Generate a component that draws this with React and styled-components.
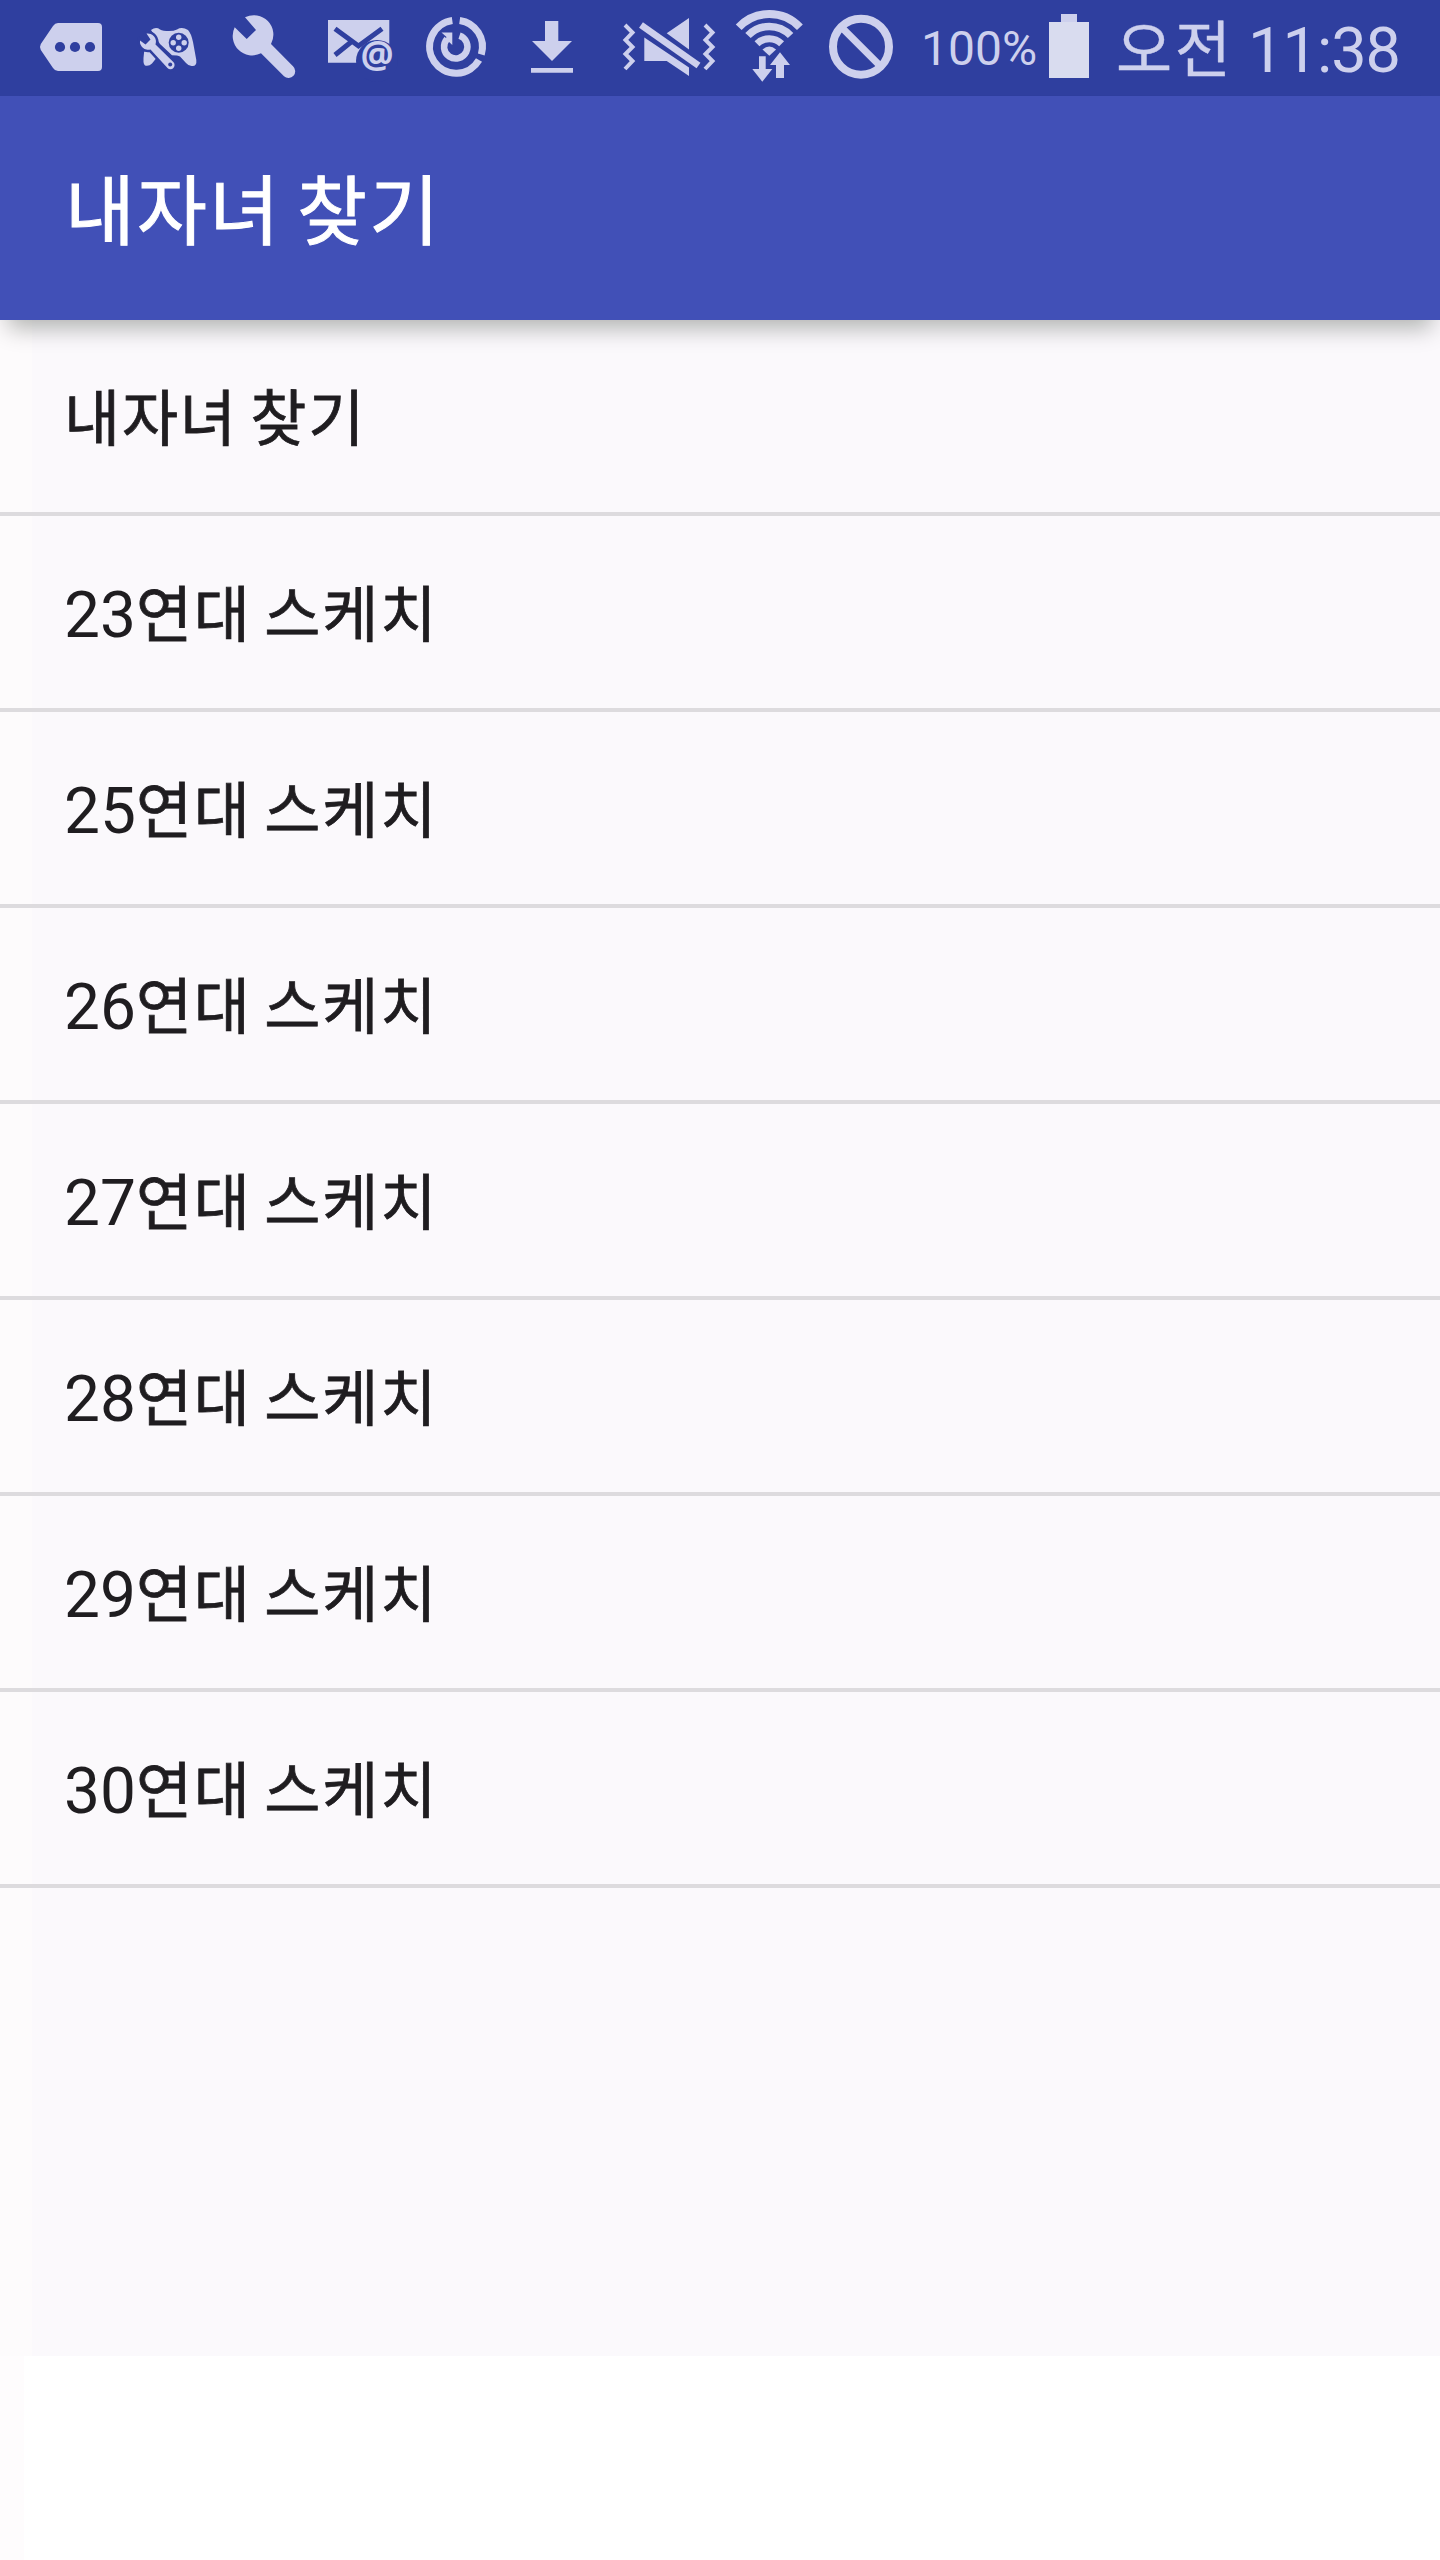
import React from "react";
import styled, { createGlobalStyle } from "styled-components";

const filas = [
    { numero: "", nombre: "내자녀 찾기" },
    { numero: "23", nombre: "연대 스케치" },
    { numero: "25", nombre: "연대 스케치" },
    { numero: "26", nombre: "연대 스케치" },
    { numero: "27", nombre: "연대 스케치" },
    { numero: "28", nombre: "연대 스케치" },
    { numero: "29", nombre: "연대 스케치" },
    { numero: "30", nombre: "연대 스케치" },
]

const App = () => {
    return(
        <Pantalla>
            <GlobalStyle />
            <StatusBar>
                <Icono viewBox="0 0 96 96">
                    <path d="M34 23H74a4 4 0 0 1 4 4V67a4 4 0 0 1-4 4H34q-3 0-5-3L16.800 50q-1.600-3 0-6L29 26q2-3 5-3z" />
                    <g className="fondo">
                        <circle cx="36" cy="47" r="5.1" />
                        <circle cx="51" cy="47" r="5.1" />
                        <circle cx="66" cy="47" r="5.1" />
                    </g>
                </Icono>
                <Icono viewBox="0 0 96 96">
                    <path d="M31 30Q36 26.500 40 29.500Q43 31 49 31Q54 31 57 29.500Q62 26.500 68 30Q71 33 73 42L76.300 60Q77 66 72.500 66Q69 66.500 66 63L60 56.500Q58 55.200 52 55.200L40 44Z" />
                    <path d="M24 53Q24 49 29 51L36 58.500L32 63.500Q29 66.500 25 65.500Q22.500 64 24 53Z" />
                    <path className="fondo borde" d="M26.500 33.500A8.300 8.300 0 0 1 35.500 44.500L53.300 62A4 4 0 0 1 47.500 68L30.500 49.500A8.300 8.300 0 0 1 20 40.500L25.500 44.500L30.500 39.500Z" />
                    <path d="M26.500 33.500A8.300 8.300 0 0 1 35.500 44.500L53.300 62A4 4 0 0 1 47.500 68L30.500 49.500A8.300 8.300 0 0 1 20 40.500L25.500 44.500L30.500 39.500Z" />
                    <g className="fondo">
                        <circle cx="50.200" cy="64.500" r="2" />
                        <circle cx="58.700" cy="42.700" r="10" />
                    </g>
                    <circle cx="58.700" cy="37.300" r="2.700" />
                    <circle cx="58.700" cy="48.200" r="2.700" />
                    <circle cx="53.200" cy="42.700" r="2.700" />
                    <circle cx="64.200" cy="42.700" r="2.700" />
                </Icono>
                <Icono viewBox="0 0 96 96">
                    <path d="M29 17.300A19.500 19.500 0 0 1 55 44L77 66.300A6.500 6.500 0 0 1 68 76.300L45 53.300A19.500 19.500 0 0 1 18.700 27.300L30.700 39L40 30Z" />
                </Icono>
                <Icono viewBox="0 0 96 96">
                    <path d="M16 20H77.300V62.700H16Z" />
                    <path className="corte" d="M23 28.800L46.500 46L70 28.800M23 55L39.700 41.500" />
                    <circle className="fondo" cx="65" cy="61" r="21" />
                    <text x="65" y="67.500" textAnchor="middle">@</text>
                </Icono>
                <Icono viewBox="0 0 96 96">
                    <path className="trazo" strokeWidth="7" d="M51.700 20.500A26.500 26.500 0 0 1 73.300 54.400M71 60A26.500 26.500 0 1 1 44.300 20.500" />
                    <path className="trazo" strokeWidth="6.500" d="M51.500 35.700A11.700 11.700 0 1 1 39 39" />
                    <path d="M33.500 32.500H44.300V45L40.500 41.500L36.500 41L38.500 37Z" />
                </Icono>
                <Icono viewBox="0 0 96 96">
                    <path d="M41 21H54.300V41H68L48 61L28 41H41ZM27 68H69V72.700H27Z" />
                </Icono>
                <Icono viewBox="0 0 120 96" $ancho={120}>
                    <path className="trazo" strokeWidth="4" d="M25 25L32.500 32.500L25.500 40L32.500 47L25.500 54L32.500 61L25 69M105 25L112.500 32.500L105.500 40L112.500 47L105.500 54L112.500 61L105 69" />
                    <path d="M89 18V49.500L66.700 33.300ZM44.300 37.500L89 67.500V76L66.700 61H44.300Z" />
                    <path className="trazo" strokeWidth="6.700" d="M41 25L98.500 65.500" />
                </Icono>
                <Icono viewBox="0 0 96 96">
                    <path className="trazo" strokeWidth="8" d="M18.700 27.300A42 42 0 0 1 79.900 27.300" />
                    <path className="trazo" strokeWidth="7.500" d="M28 35.500A29.500 29.500 0 0 1 70.600 35.500" />
                    <path className="trazo" strokeWidth="7" d="M37 43.700A17.500 17.500 0 0 1 61.600 43.700" />
                    <path d="M42.500 49.500Q49.300 43.500 56.100 49.500L49.300 55.700Z" />
                    <path d="M39 56.300H45.700V69H52.300L42.300 81.700L32.300 69H39ZM60 52.300L70 65H64V78H56V65H50Z" />
                </Icono>
                <Icono viewBox="0 0 96 96">
                    <circle className="trazo" strokeWidth="8" cx="45" cy="46.700" r="28" />
                    <path className="trazo" strokeWidth="7" d="M26 27.700L64 65.700" />
                </Icono>
                <Porcentaje>100%</Porcentaje>
                <Bateria viewBox="0 0 40 96">
                    <path className="tapa" d="M12 14H28V22H12Z" />
                    <path d="M0 22H40V78H0Z" />
                </Bateria>
                <Hora><span>오전</span> 11:38</Hora>
            </StatusBar>
            <Cabecera>
                <h1>내자녀 찾기</h1>
            </Cabecera>
            <Lista>
                {filas.map(({ numero, nombre }) => (
                    <Fila key={numero}>{numero}<Nombre>{nombre}</Nombre></Fila>
                ))}
            </Lista>
            <Pie />
        </Pantalla>
    )
}

const GlobalStyle = createGlobalStyle`
    * {
        box-sizing: border-box;
    }
    body {
        margin: 0;
    }
`

const Pantalla = styled.main`
    width: 1440px;
    height: 2560px;
    display: flex;
    flex-direction: column;
    overflow: hidden;
    font-family: Roboto, "Noto Sans CJK KR", sans-serif;
`

const StatusBar = styled.header`
    height: 96px;
    flex: none;
    display: flex;
    padding-left: 24px;
    background-color: #2f3f9f;
    color: #cdd0ed;
    white-space: nowrap;
`

const Icono = styled.svg`
    width: ${({ $ancho }) => $ancho || 96}px;
    height: 96px;
    flex: none;
    fill: #cdd0ed;
    .fondo {
        fill: #2f3f9f;
    }
    .borde {
        stroke: #2f3f9f;
        stroke-width: 5px;
    }
    .corte {
        fill: none;
        stroke: #2f3f9f;
        stroke-width: 5px;
    }
    .trazo {
        fill: none;
        stroke: #cdd0ed;
    }
    text {
        font-family: "Open Sans", sans-serif;
        font-size: 37px;
        font-weight: 700;
    }
`

const Porcentaje = styled.span`
    width: 137px;
    padding-left: 9px;
    font-size: 48px;
    line-height: 97px;
`

const Bateria = styled.svg`
    width: 40px;
    height: 96px;
    flex: none;
    fill: #d9dcef;
    .tapa {
        fill: #cdd0ed;
    }
`

const Hora = styled.div`
    margin-left: 27px;
    font-size: 63px;
    letter-spacing: -1px;
    line-height: 101px;
    span {
        font-size: 61px;
        letter-spacing: 2.6px;
        line-height: 1;
        -webkit-text-stroke: 0.4px;
    }
`

const Cabecera = styled.div`
    height: 224px;
    flex: none;
    display: flex;
    align-items: center;
    padding: 9px 0 0 65px;
    background-color: #4150b7;
    color: #ffffff;
    box-shadow: 0 16px 22px -8px rgba(0, 12, 0, 0.3);
    z-index: 1;
    h1 {
        margin: 0;
        font-size: 76px;
        font-weight: 400;
        letter-spacing: 2.2px;
        word-spacing: -5.3px;
        line-height: 120px;
        -webkit-text-stroke: 1px;
    }
`

const Lista = styled.ul`
    height: 2036px;
    flex: none;
    margin: 0;
    padding: 0;
    list-style: none;
    background: linear-gradient(to right, #fdfbfc 32px, #fbf9fc 32px);
`

const Fila = styled.li`
    height: 196px;
    padding-left: 64px;
    border-bottom: 4px solid #dddbde;
    color: #1f1d20;
    font-size: 64px;
    line-height: 199px;
`

const Nombre = styled.span`
    font-size: 61px;
    letter-spacing: 1.8px;
    word-spacing: -4.4px;
    line-height: 1;
    -webkit-text-stroke: 0.8px;
`

const Pie = styled.div`
    flex: 1;
    border-left: 24px solid #fefcfd;
    background-color: #ffffff;
`

export default App
